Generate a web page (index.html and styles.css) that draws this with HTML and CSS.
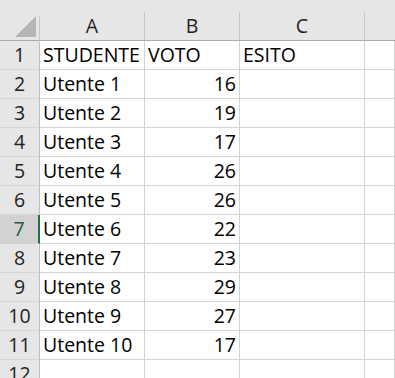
FILE: index.html
```html
<!DOCTYPE html>
<html>
<head>
<meta charset="utf-8">
<link rel="stylesheet" href="styles.css">
</head>
<body>
<div class="sheet">
  <div class="hd corner"><div class="hin"><svg class="tri" width="22" height="21" viewBox="0 0 22 21"><polygon points="0,21 21,0 21,21" fill="#b5b5b5"/></svg></div></div>
  <div class="hd"><div class="hin">A</div></div>
  <div class="hd"><div class="hin">B</div></div>
  <div class="hd"><div class="hin">C</div></div>
  <div class="hd"><div class="hin last"></div></div>

  <div class="rh">1</div><div class="c">STUDENTE</div><div class="c">VOTO</div><div class="c">ESITO</div><div class="c"></div>
  <div class="rh">2</div><div class="c">Utente 1</div><div class="c n">16</div><div class="c"></div><div class="c"></div>
  <div class="rh">3</div><div class="c">Utente 2</div><div class="c n">19</div><div class="c"></div><div class="c"></div>
  <div class="rh">4</div><div class="c">Utente 3</div><div class="c n">17</div><div class="c"></div><div class="c"></div>
  <div class="rh">5</div><div class="c">Utente 4</div><div class="c n">26</div><div class="c"></div><div class="c"></div>
  <div class="rh">6</div><div class="c">Utente 5</div><div class="c n">26</div><div class="c"></div><div class="c"></div>
  <div class="rh sel">7</div><div class="c">Utente 6</div><div class="c n">22</div><div class="c"></div><div class="c"></div>
  <div class="rh">8</div><div class="c">Utente 7</div><div class="c n">23</div><div class="c"></div><div class="c"></div>
  <div class="rh">9</div><div class="c">Utente 8</div><div class="c n">29</div><div class="c"></div><div class="c"></div>
  <div class="rh">10</div><div class="c">Utente 9</div><div class="c n">27</div><div class="c"></div><div class="c"></div>
  <div class="rh">11</div><div class="c">Utente 10</div><div class="c n">17</div><div class="c"></div><div class="c"></div>
  <div class="rh">12</div><div class="c"></div><div class="c"></div><div class="c"></div><div class="c"></div>
</div>
</body>
</html>
```
FILE: styles.css
```css
html, body {
  margin: 0;
  padding: 0;
  background: #ffffff;
  overflow: hidden;
}
.sheet {
  display: grid;
  grid-template-columns: 40px 105px 95px 125px 1fr;
  grid-template-rows: 41px repeat(12, 29px);
  font-family: "Open Sans", sans-serif;
  font-size: 19.5px;
  color: #000;
  width: 395px;
}
.hd {
  background: #e6e6e6;
  border-bottom: 1px solid #ababab;
  padding-top: 12px;
  box-sizing: border-box;
}
.hin {
  height: 28px;
  border-right: 1px solid #c8c8c8;
  box-sizing: border-box;
  line-height: 28px;
  text-align: center;
  color: #222;
}
.hin.last {
  border-right: none;
}
.corner .hin {
  position: relative;
}
.tri {
  display: block;
  margin: 4px 0 0 15px;
}
.rh {
  background: #e6e6e6;
  border-right: 1px solid #bdbdbd;
  border-bottom: 1px solid #d4d4d4;
  box-sizing: border-box;
  text-align: center;
  line-height: 28px;
  color: #222;
}
.rh.sel {
  background: #d2d2d2;
  border-right: 2px solid #217346;
  color: #1f5e3a;
}
.c {
  border-right: 1px solid #d4d4d4;
  border-bottom: 1px solid #d4d4d4;
  box-sizing: border-box;
  line-height: 28px;
  padding: 0 3px;
  white-space: nowrap;
  overflow: hidden;
}
.c.n {
  text-align: right;
}
```
